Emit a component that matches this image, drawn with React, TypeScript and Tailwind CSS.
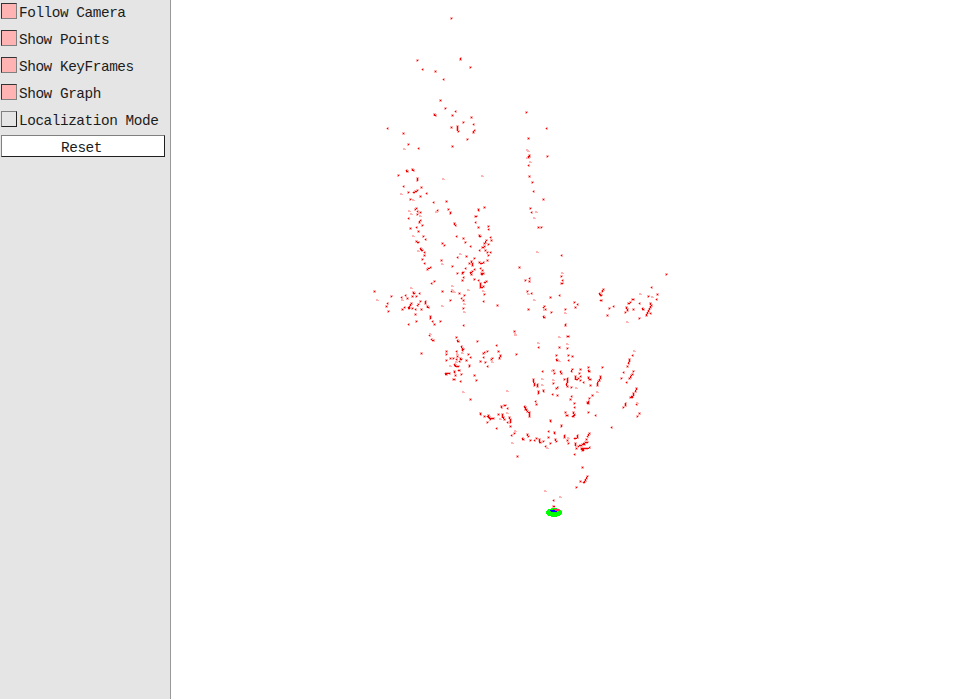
type Cluster = { x: number; y: number; solid: string; faint: string };

// Map points grouped by cluster; offsets are stored in thirds of a pixel.
const clusters: Cluster[] = [
  {
    x: 370, y: 0,
    solid: "244,55 271,175 271,178 142,181 157,208 196,214 301,202 220,238 211,301 226,325 256,334 247,346 193,343 195,346 304,352 280,367 310,373 244,382 262,380 262,385 263,388 265,395 313,392 310,397 292,418 52,385 100,401 115,433 145,445 247,439",
    faint: "103,449",
  },
  {
    x: 370, y: 155,
    solid: "85,61 110,46 111,48 128,43 130,46 142,70 142,75 100,94 154,97 115,112 130,112 135,109 141,106 169,115 151,124 121,133 191,142 229,139 235,163 202,166 139,160 137,163 142,169 151,172 142,178 115,190 240,172 241,175 151,196 149,202 157,211 139,217 121,220 253,205 256,211 145,229 160,244 166,253 140,259 145,262 259,244 280,250 286,262 301,274 217,265 223,271 150,280 153,283 157,285 163,292 343,157 325,163 326,166 316,184 319,184 316,202 325,217 355,214 355,223 329,240 331,244 361,247 364,256 350,256 346,262 342,265 355,268 341,276 344,275 338,278 328,286 346,286 352,292 361,292",
    faint: "220,74 336,63 94,118 130,135 118,168 125,178 151,183 199,171 131,244 145,288 272,297",
  },
  {
    x: 370, y: 250,
    solid: "163,16 157,28 163,40 171,57 175,55 181,52 214,31 247,49 262,22 289,19 262,70 277,66 277,70 280,67 286,55 298,40 305,35 306,40 306,46 313,25 301,67 305,72 307,64 313,59 328,37 334,40 340,37 352,31 355,16 331,55 337,61 337,70 340,70 335,70 337,74 280,82 277,91 313,88 325,91 331,100 332,107 335,112 339,110 331,112 343,97 349,94 343,133 340,154 382,166 192,95 185,100 217,124 241,151 244,124 268,130 283,136 274,145 280,151 280,175 280,227 13,124 64,139 52,160 49,169 55,184 106,136 131,127 134,130 148,130 127,139 139,139 94,141 112,145 151,154 166,154 166,159 145,163 143,166 124,160 121,167 115,172 119,173 117,176 103,172 97,178 127,175 136,178 154,178 172,169 175,172 136,193 139,214 115,223 181,200 182,206 187,213 193,223 211,214 178,256 154,310",
    faint: "217,42 22,152 125,116 97,150 247,110 248,120 252,128 295,122 283,164 283,187 217,168 340,125",
  },
  {
    x: 500, y: 100,
    solid: "79,37 139,85 85,115 88,167 88,170 85,172 142,169 85,196 88,229 97,247 100,274 130,298 91,325 94,337 115,382 124,382 184,466",
    faint: "83,150 86,153 81,174 91,186 109,336 104,354 111,456",
  },
  {
    x: 500, y: 255,
    solid: "58,37 76,76 88,70 88,79 82,109 94,115 85,163 184,64 187,76 184,84 187,85 178,121 151,127 133,154 130,157 136,163 154,172 130,185 132,187 196,163 196,208 196,211 223,142 232,148 226,157 202,243 205,244 178,277 202,280 115,277 43,229 49,298 1,300 1,303",
    faint: "187,54 86,117 102,136 133,167 196,174 45,240 114,266 178,247 201,268",
  },
  {
    x: 590, y: 260,
    solid: "229,43 184,82 203,103 175,109 199,118 40,87 38,94 28,100 32,103 34,106 31,120 33,121 58,145 70,139 52,166 127,118 131,118 115,130 121,128 149,130 130,148 110,143 111,149 113,151 106,157 158,144 161,147 182,130 183,135 182,141 179,147 176,152 175,154 172,161 181,160 169,166 148,175 127,286 118,299 118,304 115,310 112,319 130,334 100,337 127,343 124,347 120,351 118,355 94,355 109,367 139,385 139,388 136,394 131,400 129,405 125,409 122,411 127,411 106,431 105,436 100,442 139,433 148,460 142,469",
    faint: "151,104 186,112 112,188 132,274 143,430",
  },
  {
    x: 430, y: 330,
    solid: "4,28 10,31 79,22 82,31 84,34 142,34 94,49 97,56 100,59 96,61 49,64 49,73 79,64 82,79 115,73 121,82 61,85 70,85 79,88 91,85 93,88 88,94 109,91 49,91 73,103 76,107 85,109 79,108 117,106 118,109 84,121 88,121 73,125 73,128 76,136 94,133 45,131 48,132 52,131 57,130 73,147 70,148 91,154 133,136 139,151 163,67 160,70 172,64 160,82 151,94 166,97 172,109 184,88 186,86 199,46 205,64 211,75 210,79 208,85 259,73 253,4 121,208 150,251 151,253 163,259 175,257 172,260 179,263 182,267 185,266 190,264 172,277 199,295 205,253 214,228 215,233 223,226 226,227 232,235 216,254 218,258 220,263 222,267 238,262 240,267 241,273 240,277 232,277 241,290 253,310 244,316 262,379",
    faint: "61,110 101,187 82,72 98,70 78,98 188,97 232,183 233,250 210,267 255,303 246,340 255,14 2,14",
  },
  {
    x: 515, y: 355,
    solid: "124,1 125,13 127,16 161,1 161,16 172,4 262,37 82,49 115,46 118,55 136,49 138,54 172,43 170,49 196,43 220,37 220,46 223,49 193,55 196,64 181,64 182,70 184,72 190,70 196,76 206,82 221,67 222,73 226,73 226,90 256,64 256,69 253,75 251,79 248,86 248,91 149,73 157,70 157,76 157,82 155,89 157,94 55,73 54,79 58,85 58,91 67,88 67,94 115,85 127,97 124,100 84,105 85,108 70,109 71,116 112,118 127,121 169,97 169,124 167,133 178,145 178,158 232,121 223,130 221,139 220,145 217,142 61,139 64,148 220,172 241,182 152,172 154,181 157,180 175,172 178,177 173,183 175,185 177,182 28,153 30,157 30,162 33,164 38,169 43,173 44,179 43,185 106,196 105,199 138,211 139,214 290,217 37,238 40,244 23,250 25,254 46,256 58,256 64,250 73,253 73,259 75,261 85,259 100,229 100,247 119,232 119,235 122,253 124,258 147,241 148,247 106,266 91,274 157,256 160,265 187,241 186,247 181,251 178,250 222,235 220,241 217,244 214,254 217,261 205,264 211,262 203,268 199,271 207,269 181,265 182,272 184,279 190,274 193,271 199,280 203,281 207,280 211,280 216,279 222,276 202,285 205,286 178,298",
    faint: "134,18 82,73 115,75 112,50 184,101 248,113 82,90 2,230 98,281 160,250",
  },
  {
    x: 530, y: 440,
    solid: "158,82 171,109 169,115 166,121 162,126 160,126 150,125 140,142 70,181 70,199",
    faint: "45,154 90,171",
  },
];

function parse(c: Cluster, list: string) {
  return list.split(" ").map((p) => {
    const [a, b] = p.split(",").map(Number);
    return [c.x + Math.floor(a / 3), c.y + Math.floor(b / 3)];
  });
}

const solid = clusters.flatMap((c) => parse(c, c.solid));
const faint = clusters.flatMap((c) => parse(c, c.faint));

// Neighbouring points merge into one blob.
const joints: number[][] = [];
solid.forEach(([ax, ay], i) => {
  solid.slice(i + 1).forEach(([bx, by]) => {
    const dx = Math.abs(ax - bx);
    const dy = Math.abs(ay - by);
    if (dx > 2 || dy > 2 || dx + dy === 0 || dx + dy > 3) return;
    joints.push([Math.floor((ax + bx) / 2), Math.ceil((ay + by) / 2)]);
  });
});

const halo =
  solid
    .map(([x, y], i) =>
      i % 3 === 0
        ? `M${x - 1} ${y - 1}h3v2h-1v1h-2z`
        : i % 3 === 1
          ? `M${x} ${y - 1}h2v3h-2v-1h-1v-1h1z`
          : `M${x - 1} ${y - 1}h3v3h-3z`,
    )
    .join("") +
  faint.map(([x, y]) => `M${x - 1} ${y}h3v1h-3zM${x - 1} ${y - 1}h2v1h-2z`).join("");
const core = [...solid, ...joints].map(([x, y]) => `M${x} ${y}h1v1h-1z`).join("");

function Toggle({ label, on }: { label: string; on: boolean }) {
  return (
    <div className="flex h-[27px] items-start">
      <div
        className={`mt-[3px] h-4 w-4 shrink-0 border ${
          on
            ? "border-t-[#333333] border-l-[#333333] border-r-[#808080] border-b-[#808080] bg-[#ffb3b3]"
            : "border-t-[#808080] border-l-[#808080] border-r-[#202020] border-b-[#202020]"
        }`}
      />
      <span className="ml-[2px] pt-[3px] leading-[20px] whitespace-pre">{label}</span>
    </div>
  );
}

export default function App() {
  return (
    <div className="flex h-[699px] w-[971px] overflow-hidden bg-white">
      <aside className="flex w-[171px] shrink-0 flex-col border-r border-[#999999] bg-[#e5e5e5] pl-px font-['Liberation_Mono',monospace] text-[14.4px] tracking-[-0.44px] text-[#1c1c1c]">
        <Toggle label="Follow Camera" on />
        <Toggle label="Show Points" on />
        <Toggle label="Show KeyFrames" on />
        <Toggle label="Show Graph" on />
        <Toggle label="Localization Mode" on={false} />
        <button className="h-[22px] w-[164px] border border-t-[#808080] border-l-[#808080] border-r-[#202020] border-b-[#202020] bg-white pt-[2px] pr-[3px] leading-[20px]">
          Reset
        </button>
      </aside>
      <main className="flex-1">
        <svg width="800" height="699" viewBox="171 0 800 699" shapeRendering="crispEdges">
          <path d={halo} fill="#ffb4b4" fillRule="nonzero" />
          <path d={core} fill="#f00000" />
          <ellipse cx="554" cy="512.5" rx="8.2" ry="4.3" fill="#00ff00" />
          <path d="M550 510h8v1h-8zM551 511h6v1h-6z" fill="#0000ff" />
          <path d="M553 509h6v1h-6zM555 510h5v1h-5z" fill="#ff3050" />
          <path d="M553 506h2v1h-2z" fill="#f00000" />
        </svg>
      </main>
    </div>
  );
}
